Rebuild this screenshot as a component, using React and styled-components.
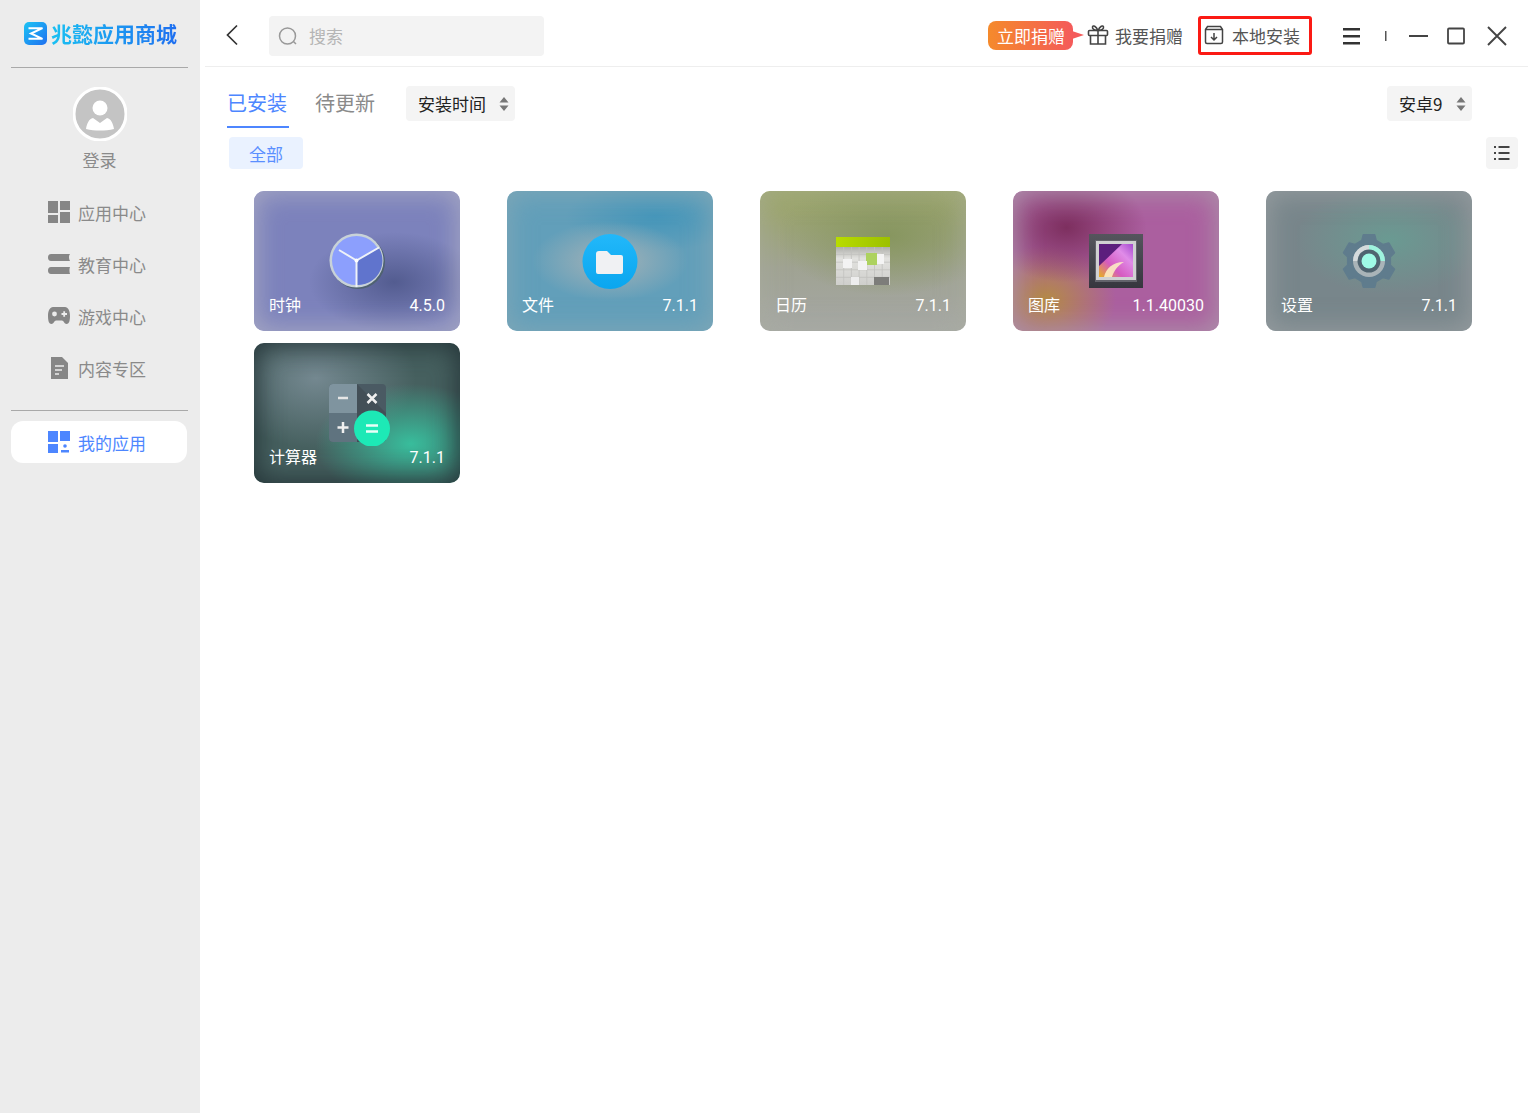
import React from "react";
import styled, { createGlobalStyle } from "styled-components";

const GlobalStyle = createGlobalStyle`
  html, body {
    margin: 0;
    padding: 0;
    background: #fff;
  }
  body {
    font-family: "Noto Sans CJK SC", "Liberation Sans", sans-serif;
  }
`;

const Page = styled.div`
  display: flex;
  width: 1536px;
  height: 1113px;
  overflow: hidden;
`;

const Sidebar = styled.aside`
  width: 200px;
  flex-shrink: 0;
  background: #ececec;
  padding: 0 12px 0 11px;
  box-sizing: border-box;
  display: flex;
  flex-direction: column;
`;

const Logo = styled.div`
  height: 68px;
  border-bottom: 1px solid #a9a9a9;
  display: flex;
  align-items: flex-start;
  padding: 22px 0 0 13px;
  box-sizing: border-box;
  gap: 3px;
`;

const LogoText = styled.span`
  font-size: 21px;
  line-height: 26px;
  margin-top: -2px;
  font-weight: 700;
  white-space: nowrap;
  background: linear-gradient(90deg, #19c0f2, #1f6ff0);
  -webkit-background-clip: text;
  background-clip: text;
  color: transparent;
`;

const Profile = styled.div`
  display: flex;
  flex-direction: column;
  align-items: center;
  padding-top: 19px;
  height: 118px;
  box-sizing: border-box;
`;

const LoginText = styled.span`
  font-size: 17px;
  line-height: 24px;
  color: #8a8a8a;
  margin-top: 7px;
`;

const Nav = styled.nav`
  display: flex;
  flex-direction: column;
  padding-bottom: 16px;
  border-bottom: 1px solid #a9a9a9;
`;

const NavItem = styled.div`
  height: 52px;
  box-sizing: border-box;
  display: flex;
  align-items: center;
  gap: 8px;
  padding-left: 37px;
  font-size: 17px;
  color: ${(p) => (p.$active ? "#4d86ff" : "#8a8a8a")};
`;

const ActiveItem = styled(NavItem)`
  height: 42px;
  width: 176px;
  margin-top: 10px;
  background: #fff;
  border-radius: 12px;
`;

const Main = styled.main`
  flex: 1;
  min-width: 0;
  display: flex;
  flex-direction: column;
  padding: 0 8px 0 5px;
`;

const TopBar = styled.header`
  height: 67px;
  box-sizing: border-box;
  border-bottom: 1px solid #eeeeee;
  display: flex;
  align-items: center;
  padding: 4px 0 0 15px;
`;

const BackButton = styled.div`
  width: 49px;
  height: 36px;
  box-sizing: border-box;
  padding-left: 5px;
  display: flex;
  align-items: center;
`;

const SearchBox = styled.div`
  width: 275px;
  height: 40px;
  border-radius: 4px;
  background: #f3f3f3;
  display: flex;
  align-items: center;
  padding-left: 8px;
  gap: 10px;
  box-sizing: border-box;
  font-size: 17px;
  color: #b5b5b5;
  margin-top: 2px;
`;

const SearchText = styled.span`
  padding-bottom: 2px;
`;

const TopActions = styled.div`
  margin-left: auto;
  display: flex;
  align-items: center;
`;

const DonateBadge = styled.div`
  position: relative;
  width: 85px;
  height: 29px;
  border-radius: 8px;
  box-sizing: border-box;
  padding-left: 9px;
  background: linear-gradient(90deg, #f58a2b, #f45a5a);
  color: #fff;
  font-size: 17px;
  line-height: 29px;
  white-space: nowrap;
  margin-right: 14px;

  &::after {
    content: "";
    position: absolute;
    right: -11px;
    top: 10px;
    border-left: 12px solid #f45a5a;
    border-top: 4px solid transparent;
    border-bottom: 4px solid transparent;
  }
`;

const ActionText = styled.span`
  font-size: 17px;
  color: #555;
  white-space: nowrap;
`;

const DonateLink = styled.div`
  display: flex;
  align-items: center;
  gap: 6px;
  margin-right: 15px;
`;

const LocalInstall = styled.div`
  width: 114px;
  height: 39px;
  box-sizing: border-box;
  border: 3px solid #fb1a14;
  border-radius: 3px;
  display: flex;
  align-items: center;
  gap: 8px;
  padding-left: 3px;
  margin-right: 31px;
`;

const WindowControls = styled.div`
  display: flex;
  align-items: center;
  margin-top: 2px;
`;

const WinIcon = styled.svg`
  display: block;
  margin-left: ${(p) => p.$left || 0}px;
  margin-right: ${(p) => p.$right || 0}px;
`;

const Tabs = styled.div`
  display: flex;
  align-items: flex-start;
  height: 61px;
  box-sizing: border-box;
  padding: 19px 56px 0 22px;
`;

const Tab = styled.div`
  width: 62px;
  height: 42px;
  box-sizing: border-box;
  font-size: 20px;
  line-height: 34px;
  color: ${(p) => (p.$active ? "#4d86ff" : "#8a8a8a")};
  border-bottom: 2px solid ${(p) => (p.$active ? "#4d86ff" : "transparent")};
  margin-right: ${(p) => p.$gap}px;
  white-space: nowrap;
`;

const Select = styled.div`
  height: 35px;
  width: ${(p) => p.$width}px;
  margin-left: ${(p) => p.$push || 0};
  border-radius: 4px;
  background: #f4f4f4;
  display: flex;
  align-items: center;
  justify-content: space-between;
  padding: 0 6px 0 12px;
  box-sizing: border-box;
  font-size: 17px;
  color: #222;
  white-space: nowrap;
`;

const FilterRow = styled.div`
  display: flex;
  align-items: center;
  justify-content: space-between;
  height: 32px;
  margin-top: 9px;
  padding: 0 10px 0 24px;
`;

const Chip = styled.div`
  width: 74px;
  height: 32px;
  border-radius: 4px;
  background: #eaf2ff;
  color: #5a8fff;
  font-size: 17px;
  line-height: 33px;
  text-align: center;
`;

const ListToggle = styled.div`
  width: 32px;
  height: 32px;
  border-radius: 4px;
  background: #f4f4f4;
  display: flex;
  align-items: center;
  justify-content: center;
`;

const Grid = styled.section`
  display: grid;
  grid-template-columns: repeat(5, 206px);
  grid-auto-rows: 140px;
  column-gap: 47px;
  row-gap: 12px;
  padding: 22px 0 0 49px;
`;

const Card = styled.article`
  position: relative;
  overflow: hidden;
  border-radius: 10px;
  background: ${(p) => p.$bg};
  color: #fff;

  &::before {
    content: "";
    position: absolute;
    inset: 0;
    box-shadow: inset 0 0 26px 3px ${(p) => p.$edge};
    border-radius: 10px;
  }
`;

const CardIcon = styled.div`
  position: absolute;
  left: 75px;
  top: ${(p) => p.$top || 42}px;
  width: 56px;
  height: 56px;
`;

const CardLabel = styled.div`
  position: absolute;
  left: 15px;
  right: 15px;
  bottom: 14px;
  display: flex;
  justify-content: space-between;
  align-items: center;
  font-size: 16px;
  line-height: 22px;
`;

const CardName = styled.span`
  padding-bottom: 2px;
`;

const Version = styled.span`
  font-family: "Roboto", "Liberation Sans", sans-serif;
  font-size: 16px;
  margin-top: 2px;
`;

const LogoMark = () => (
  <svg width="24" height="24" viewBox="0 0 24 24">
    <defs>
      <linearGradient id="logoG" x1="0" y1="0" x2="1" y2="1">
        <stop offset="0" stopColor="#1cc4f4" />
        <stop offset="1" stopColor="#1f6ff0" />
      </linearGradient>
    </defs>
    <rect width="23" height="23" rx="5" fill="url(#logoG)" />
    <path d="M4.500 6.200H18.500L7 11.500L18.500 16.800H4.500" fill="none" stroke="#fff" strokeWidth="2" />
  </svg>
);

const Avatar = () => (
  <svg width="54" height="54" viewBox="0 0 54 54">
    <circle cx="27" cy="27" r="26" fill="#c4c4c4" stroke="#fff" strokeWidth="3" />
    <circle cx="27" cy="21" r="7.500" fill="#fff" />
    <path d="M20 31l7 5 7-5c4 1 6 5 7 11-9 2-19 2-28 0 1-6 3-10 7-11z" fill="#fff" />
  </svg>
);

const GridIcon = () => (
  <svg width="22" height="22" viewBox="0 0 22 22" fill="#868686">
    <rect x="0" y="0" width="10" height="12" />
    <rect x="12" y="0" width="10" height="9" />
    <rect x="0" y="14" width="10" height="8" />
    <rect x="12" y="11" width="10" height="11" />
  </svg>
);

const BookIcon = () => (
  <svg width="22" height="22" viewBox="0 0 22 22" fill="#868686">
    <path d="M3 1h19c-.8 1-1 2-1 3.500 0 1.200.3 2.500 1 3.500H3C1 8 0 6.500 0 4.500S1 1 3 1z" />
    <path d="M3 14h19c-.7 1.500-.7 5 0 7H3c-2 0-3-1.500-3-3.500S1 14 3 14z" />
  </svg>
);

const GameIcon = () => (
  <svg width="22" height="22" viewBox="0 0 22 22">
    <path d="M5 2h12c3 0 5 3.500 5 9 0 5-1 8-3.500 8-2 0-3-3.500-4.500-3.500H8C6.500 15.500 5.500 19 3.500 19 1 19 0 16 0 11c0-5.500 2-9 5-9z" fill="#868686" />
    <circle cx="6.500" cy="9" r="2.400" fill="#ececec" />
    <path d="M13.500 9h5.500M16.200 6.300v5.400" stroke="#ececec" strokeWidth="1.800" />
  </svg>
);

const DocIcon = () => (
  <svg width="22" height="22" viewBox="0 0 22 22">
    <path d="M3 0h11l6 6v16H3z" fill="#868686" />
    <path d="M7 9h9M7 13h7M7 17h4" stroke="#ececec" strokeWidth="1.300" />
  </svg>
);

const MyAppsIcon = () => (
  <svg width="22" height="22" viewBox="0 0 22 22" fill="#4d86ff">
    <rect x="0" y="0" width="10" height="11" />
    <rect x="12" y="0" width="10" height="10" />
    <rect x="0" y="13" width="10" height="9" />
    <circle cx="17" cy="15" r="1.800" />
    <rect x="13" y="19" width="8" height="2.500" />
  </svg>
);

const BackIcon = () => (
  <svg width="14" height="22" viewBox="0 0 14 22" fill="none" stroke="#333" strokeWidth="1.700">
    <path d="M12 1.500L2.500 11 12 20.500" />
  </svg>
);

const SearchIcon = () => (
  <svg width="22" height="22" viewBox="0 0 22 22" fill="none" stroke="#999" strokeWidth="1.500">
    <circle cx="10.500" cy="11" r="8" />
    <path d="M16.500 16.500l2.500 2.500" />
  </svg>
);

const GiftIcon = () => (
  <svg width="22" height="22" viewBox="0 0 22 22" fill="none" stroke="#444" strokeWidth="1.600">
    <rect x="1.500" y="6.500" width="19" height="5" rx="1" />
    <path d="M3.500 11.500v8.500h15v-8.500M11 6.500V20" />
    <path d="M11 6.500C9 2 6 1 5.500 3s2 3.500 5.500 3.500zM11 6.500C13 2 16 1 16.500 3s-2 3.500-5.500 3.500z" />
  </svg>
);

const InstallIcon = () => (
  <svg width="20" height="20" viewBox="0 0 20 20" fill="none" stroke="#444" strokeWidth="1.500">
    <path d="M3.500 1.500h13l2 3V17a1.500 1.500 0 0 1-1.500 1.500H3A1.500 1.500 0 0 1 1.500 17V4.500z" />
    <path d="M1.500 4.500h17M10 8v7M7 12l3 3 3-3" />
  </svg>
);

const Arrows = () => (
  <svg width="10" height="14" viewBox="0 0 10 14" fill="#777">
    <path d="M5 0l4.500 5.500h-9zM5 14L.5 8.500h9z" />
  </svg>
);

const ListIcon = () => (
  <svg width="18" height="18" viewBox="0 0 18 18" fill="#444">
    <rect x="1" y="2" width="2" height="2" />
    <rect x="5.500" y="2" width="11" height="2" />
    <rect x="1" y="8" width="2" height="2" />
    <rect x="5.500" y="8" width="11" height="2" />
    <rect x="1" y="14" width="2" height="2" />
    <rect x="5.500" y="14" width="11" height="2" />
  </svg>
);

const ClockIcon = () => (
  <svg width="56" height="56" viewBox="0 0 56 56">
    <circle cx="29" cy="29" r="27" fill="#4f6270" />
    <circle cx="27.500" cy="27.500" r="27" fill="#c8d2d8" />
    <circle cx="27.500" cy="27.500" r="24.500" fill="#8c9ffd" />
    <path d="M27.500 27.500L50 15A24.500 24.500 0 0 1 27.500 52z" fill="#6074cd" />
    <path d="M27.500 27.500L10 17M27.500 27.500L50 14.500M27.500 27.500V54" stroke="#eef2f8" strokeWidth="2" />
    <circle cx="27.500" cy="27.500" r="2" fill="#fff" />
  </svg>
);

const FilesIcon = () => (
  <svg width="56" height="56" viewBox="0 0 56 56">
    <defs>
      <linearGradient id="filesG" x1="0" y1="0" x2="0" y2="1">
        <stop offset="0" stopColor="#22b8fa" />
        <stop offset="1" stopColor="#0aa6ef" />
      </linearGradient>
    </defs>
    <circle cx="28" cy="27.500" r="27.500" fill="url(#filesG)" />
    <path d="M14 20a3 3 0 0 1 3-3h8l4 4h10a2 2 0 0 1 2 2v15a2 2 0 0 1-2 2H16a2 2 0 0 1-2-2z" fill="#f0f1f3" />
  </svg>
);

const CalendarIcon = () => {
  const lines = [];
  for (let i = 1; i < 7; i++) lines.push(`M${1 + i * 7.700} 14V52`);
  for (let i = 1; i < 5; i++) lines.push(`M1 ${14 + i * 7.600}H55`);
  return (
    <svg width="56" height="56" viewBox="0 0 56 56">
      <defs>
        <linearGradient id="calTop" x1="0" y1="0" x2="1" y2="0">
          <stop offset="0" stopColor="#b8dc00" />
          <stop offset="1" stopColor="#9cc000" />
        </linearGradient>
        <linearGradient id="calBody" x1="0" y1="0" x2="0" y2="1">
          <stop offset="0" stopColor="#aeafaa" />
          <stop offset="0.3" stopColor="#e2e2df" />
          <stop offset="1" stopColor="#cfcfcc" />
        </linearGradient>
      </defs>
      <rect x="1" y="14" width="54" height="38" fill="url(#calBody)" />
      <rect x="1" y="4" width="54" height="10" fill="url(#calTop)" />
      <path d={lines.join("")} stroke="#c2c2bf" strokeWidth="0.800" />
      <rect x="39" y="44" width="15" height="8" fill="#7d7d7a" />
      <rect x="42" y="21" width="7" height="10" fill="#f4f4f4" />
      <rect x="31" y="20" width="11" height="12" fill="#add25f" />
      <rect x="8" y="26" width="9" height="9" fill="#f3f3f3" />
      <rect x="23" y="28" width="9" height="9" fill="#f3f3f3" />
      <rect x="16" y="44" width="8" height="8" fill="#ededed" />
    </svg>
  );
};

const GalleryIcon = () => (
  <svg width="56" height="56" viewBox="0 0 56 56">
    <defs>
      <linearGradient id="galFrame" x1="0" y1="0" x2="0" y2="1">
        <stop offset="0" stopColor="#55555d" />
        <stop offset="1" stopColor="#36363e" />
      </linearGradient>
      <linearGradient id="galPic" x1="0" y1="1" x2="1" y2="0">
        <stop offset="0" stopColor="#e8b11e" />
        <stop offset="0.35" stopColor="#d55ac0" />
        <stop offset="0.7" stopColor="#e08ce8" />
        <stop offset="1" stopColor="#a54bd0" />
      </linearGradient>
    </defs>
    <rect x="1" y="1" width="54" height="54" fill="url(#galFrame)" />
    <rect x="7" y="7" width="42" height="42" fill="#63636b" />
    <rect x="8" y="8" width="40" height="39" fill="#d0d0d2" />
    <rect x="11" y="11" width="34" height="33" fill="url(#galPic)" />
    <path d="M11 11h23L11 33z" fill="#5c1e7d" />
    <path d="M16 44c2-8 8-15 20-15-7 4-10 9-12 15z" fill="#fff2c4" opacity="0.85" />
  </svg>
);

// six flat teeth, one of them pointing straight up
const gearPath = (() => {
  const pts = [];
  const at = (deg, r) => {
    const a = (deg * Math.PI) / 180;
    return `${(28 + r * Math.cos(a)).toFixed(2)} ${(28 + r * Math.sin(a)).toFixed(2)}`;
  };
  for (let i = 0; i < 6; i++) {
    const c = -90 + i * 60;
    pts.push(at(c - 19, 21.5), at(c - 12, 26.5), at(c + 12, 26.5), at(c + 19, 21.5));
  }
  return `M${pts.join("L")}z`;
})();

const SettingsIcon = () => (
  <svg width="56" height="56" viewBox="0 0 56 56">
    <path d={gearPath} fill="#5f7c8d" stroke="#5f7c8d" strokeWidth="2" strokeLinejoin="round" />
    <circle cx="28" cy="28" r="16" fill="#a9b4b8" />
    <path d="M28 28V12A16 16 0 0 1 44 28z" fill="#9ef3de" />
    <path d="M28 28V12A16 16 0 0 0 12 28z" fill="#d4dadc" />
    <circle cx="28" cy="28" r="11.500" fill="#4f6470" />
    <circle cx="28" cy="28" r="7.500" fill="#9ffbe6" />
  </svg>
);

const CalculatorIcon = () => (
  <svg width="62" height="62" viewBox="0 0 62 62">
    <rect x="0" y="0" width="57" height="58" rx="4" fill="#4a5a63" />
    <path d="M28 0L57 29V54a4 4 0 0 1-4 4H28z" fill="#434f57" />
    <path d="M4 0H28V29H0V4a4 4 0 0 1 4-4z" fill="#7f949f" />
    <path d="M0 29H28V58H4a4 4 0 0 1-4-4z" fill="#5f737f" />
    <path d="M9 14h10" stroke="#e6e6e6" strokeWidth="2.500" />
    <path d="M14 38v11M8.500 43.500h11" stroke="#f0f0f0" strokeWidth="2.500" />
    <path d="M38.500 10l9 9M47.500 10l-9 9" stroke="#f0f0f0" strokeWidth="2.500" />
    <circle cx="43" cy="44.500" r="18" fill="#1de9b6" />
    <path d="M37 41.500h12M37 47.500h12" stroke="#e8fff8" strokeWidth="2.500" />
  </svg>
);

const apps = [
  {
    name: "时钟",
    version: "4.5.0",
    icon: <ClockIcon />,
    edge: "rgba(178,178,196,0.75)",
    bg: "radial-gradient(ellipse 85px 50px at 68% 65%, #535c90 0%, rgba(83,92,144,0) 100%), #7c82bc",
  },
  {
    name: "文件",
    version: "7.1.1",
    icon: <FilesIcon />,
    top: 43,
    edge: "rgba(140,170,182,0.65)",
    bg: "radial-gradient(ellipse 78px 40px at 50% 50%, #a4b2b7 0%, rgba(164,178,183,0) 100%), radial-gradient(ellipse 90px 35px at 72% 18%, #4596ba 0%, rgba(69,150,186,0) 100%), #629fba",
  },
  {
    name: "日历",
    version: "7.1.1",
    icon: <CalendarIcon />,
    edge: "rgba(172,175,160,0.6)",
    bg: "radial-gradient(ellipse 110px 60px at 62% 32%, #87965f 0%, rgba(135,150,95,0) 100%), linear-gradient(180deg, #9aa562 0%, #a0a393 55%, #a5a7a5 100%)",
  },
  {
    name: "图库",
    version: "1.1.40030",
    icon: <GalleryIcon />,
    edge: "rgba(172,160,172,0.75)",
    bg: "radial-gradient(ellipse 80px 55px at 26% 26%, #7d2f5f 0%, rgba(125,47,95,0) 100%), radial-gradient(ellipse 70px 55px at 16% 78%, #b48b45 0%, rgba(180,139,69,0) 100%), #ab5f9f",
  },
  {
    name: "设置",
    version: "7.1.1",
    icon: <SettingsIcon />,
    edge: "rgba(158,162,164,0.75)",
    bg: "radial-gradient(ellipse 95px 55px at 60% 35%, #6a9a92 0%, rgba(106,154,146,0) 100%), #78868b",
  },
  {
    name: "计算器",
    version: "7.1.1",
    icon: <CalculatorIcon />,
    top: 41,
    edge: "rgba(32,46,50,0.85)",
    bg: "radial-gradient(ellipse 95px 60px at 76% 72%, #38bd9c 0%, rgba(56,189,156,0) 100%), radial-gradient(ellipse 100px 70px at 30% 25%, #748890 0%, rgba(116,136,144,0) 100%), #46605f",
  },
];

export default function App() {
  return (
    <Page>
      <GlobalStyle />
      <Sidebar>
        <Logo>
          <LogoMark />
          <LogoText>兆懿应用商城</LogoText>
        </Logo>
        <Profile>
          <Avatar />
          <LoginText>登录</LoginText>
        </Profile>
        <Nav>
          <NavItem><GridIcon />应用中心</NavItem>
          <NavItem><BookIcon />教育中心</NavItem>
          <NavItem><GameIcon />游戏中心</NavItem>
          <NavItem><DocIcon />内容专区</NavItem>
        </Nav>
        <ActiveItem $active><MyAppsIcon />我的应用</ActiveItem>
      </Sidebar>
      <Main>
        <TopBar>
          <BackButton><BackIcon /></BackButton>
          <SearchBox><SearchIcon /><SearchText>搜索</SearchText></SearchBox>
          <TopActions>
            <DonateBadge>立即捐赠</DonateBadge>
            <DonateLink><GiftIcon /><ActionText>我要捐赠</ActionText></DonateLink>
            <LocalInstall><InstallIcon /><ActionText>本地安装</ActionText></LocalInstall>
            <WindowControls>
              <WinIcon width="18" height="18" viewBox="0 0 18 18" fill="#333">
                <rect x="0" y="1" width="17" height="2.500" />
                <rect x="0" y="8" width="17" height="2.500" />
                <rect x="0" y="15" width="17" height="2.500" />
              </WinIcon>
              <WinIcon $left={8} width="30" height="18" viewBox="0 0 30 18">
                <rect x="16" y="4" width="1.500" height="10" fill="#555" />
              </WinIcon>
              <WinIcon $left={9} width="20" height="18" viewBox="0 0 20 18">
                <rect x="1" y="8" width="19" height="2" fill="#444" />
              </WinIcon>
              <WinIcon $left={18} width="20" height="18" viewBox="0 0 20 18" fill="none" stroke="#444" strokeWidth="1.800">
                <rect x="2" y="1.500" width="16" height="15" rx="1" />
              </WinIcon>
              <WinIcon $left={21} $right={21} width="20" height="20" viewBox="0 0 20 20" stroke="#444" strokeWidth="1.900">
                <path d="M1 1l18 18M19 1L1 19" />
              </WinIcon>
            </WindowControls>
          </TopActions>
        </TopBar>
        <Tabs>
          <Tab $active $gap={26}>已安装</Tab>
          <Tab $gap={29}>待更新</Tab>
          <Select $width={109}>安装时间<Arrows /></Select>
          <Select $width={85} $push="auto">安卓9<Arrows /></Select>
        </Tabs>
        <FilterRow>
          <Chip>全部</Chip>
          <ListToggle><ListIcon /></ListToggle>
        </FilterRow>
        <Grid>
          {apps.map((app) => (
            <Card key={app.name} $bg={app.bg} $edge={app.edge}>
              <CardIcon $top={app.top}>{app.icon}</CardIcon>
              <CardLabel>
                <CardName>{app.name}</CardName>
                <Version>{app.version}</Version>
              </CardLabel>
            </Card>
          ))}
        </Grid>
      </Main>
    </Page>
  );
}
